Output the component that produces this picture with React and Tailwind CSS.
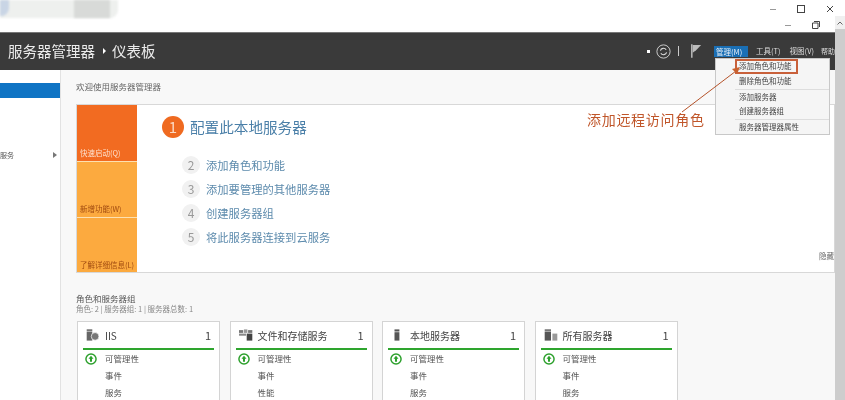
import React from 'react';

const steps = [
    ['2', '添加角色和功能'],
    ['3', '添加要管理的其他服务器'],
    ['4', '创建服务器组'],
    ['5', '将此服务器连接到云服务'],
];

const cards = [
    { title: 'IIS', icon: 'iis', rows: ['可管理性', '事件', '服务'] },
    { title: '文件和存储服务', icon: 'files', rows: ['可管理性', '事件', '性能'] },
    { title: '本地服务器', icon: 'local', rows: ['可管理性', '事件', '服务'] },
    { title: '所有服务器', icon: 'all', rows: ['可管理性', '事件', '服务'] },
];

const CardIcon = ({ type }) => {
    if (type === 'iis') {
        return (
            <svg width="14" height="12" viewBox="0 0 20 16">
                <rect x="1" y="0" width="8" height="2" fill="#555" />
                <rect x="1" y="3" width="8" height="13" fill="#666" />
                <circle cx="13" cy="10" r="5.5" fill="#777" stroke="#fff" />
            </svg>
        );
    }
    if (type === 'files') {
        return (
            <svg width="14" height="12" viewBox="0 0 20 16">
                <rect x="0" y="1" width="6" height="4" fill="#777" />
                <rect x="7" y="0" width="5" height="5" fill="#999" />
                <rect x="13" y="1" width="6" height="4" fill="#777" />
                <rect x="0" y="6" width="10" height="3" fill="#888" />
                <rect x="11" y="6" width="8" height="10" fill="#444" />
            </svg>
        );
    }
    if (type === 'local') {
        return (
            <svg width="14" height="12" viewBox="0 0 20 16">
                <rect x="5" y="0" width="7" height="3" fill="#555" />
                <rect x="5" y="4" width="7" height="12" fill="#555" />
            </svg>
        );
    }
    return (
        <svg width="14" height="12" viewBox="0 0 20 16">
            <rect x="1" y="0" width="9" height="2" fill="#555" />
            <rect x="1" y="3" width="9" height="13" fill="#555" />
            <rect x="12" y="6" width="7" height="10" fill="#999" />
        </svg>
    );
};

const UpIcon = () => (
    <svg width="12" height="12" viewBox="0 0 13 13">
        <circle cx="6.5" cy="6.5" r="5.5" fill="none" stroke="#2ca02c" strokeWidth="1.6" />
        <path d="M6.5 3 L9.2 6.2 H7.6 V9.6 H5.4 V6.2 H3.8 Z" fill="#2ca02c" />
    </svg>
);

const Card = ({ card }) => (
    <div className="w-[143px] h-[90px] bg-white border border-[#d4d4d4] px-[5px] overflow-hidden shrink-0">
        <div className="h-[28px] flex items-center border-b-2 border-[#2ea52e]">
            <div className="w-[20px] pl-[3px] flex shrink-0">
                <CardIcon type={card.icon} />
            </div>
            <span className="ml-[2px] flex-1 text-[10px] text-[#444]">{card.title}</span>
            <span className="pr-[3px] text-[11px] text-[#444]">1</span>
        </div>
        <div>
            {card.rows.map((row, i) => (
                <div key={row} className="h-[17px] flex items-center text-[8.5px] text-[#555]">
                    <div className="w-[22px] pl-[2px] flex shrink-0">{i === 0 && <UpIcon />}</div>
                    {row}
                </div>
            ))}
        </div>
    </div>
);

const App = () => {
    return (
        <div className="relative w-[845px] h-[400px] overflow-hidden bg-white blur-[0.35px] font-['Noto_Sans_CJK_SC','Noto_Sans',sans-serif]">
            {/* blurred title at top left */}
            <div className="absolute left-0 top-0 w-[118px] h-[18px] rounded-br-lg bg-[#eef0ee] blur-[1px]" />
            <div className="absolute left-0 top-0 w-[9px] h-[16px] rounded-br-lg bg-[#c9d5e5] blur-[1px]" />
            <div className="absolute left-[74px] top-0 w-[36px] h-[18px] bg-[#d8dad8] blur-[1px]" />

            {/* window title bar */}
            <div className="h-[32px] flex flex-col items-end">
                <div className="h-[16px] flex items-center gap-[21px] mr-[11px] pt-[2px]">
                    <span className="w-[6px] h-px bg-[#999]" />
                    <span className="w-[8px] h-[8px] border border-[#444]" />
                    <svg width="8" height="8" viewBox="0 0 8 8">
                        <path d="M1 1 L7 7 M7 1 L1 7" stroke="#444" />
                    </svg>
                </div>
                <div className="h-[16px] flex items-center gap-[21px] mr-[25px] pt-[2px]">
                    <span className="w-[6px] h-px bg-[#999]" />
                    <svg width="8" height="8" viewBox="0 0 8 8">
                        <path d="M2 .5 H7.5 V6 M.5 2 H6 V7.5 H.5 Z" stroke="#444" fill="none" />
                    </svg>
                </div>
            </div>

            {/* dark header */}
            <div className="h-[38px] bg-[#3a3a3a] border-t border-[#777] pb-[1px] flex items-center mr-[10px]">
                <span className="ml-[8px] text-[14.5px] text-[#ececec]">服务器管理器</span>
                <span className="ml-[8px] mr-[6px] w-0 h-0 border-y-[3px] border-y-transparent border-l-[3px] border-l-white" />
                <span className="text-[14.5px] text-[#ececec]">仪表板</span>
                <div className="ml-auto flex items-center">
                    <span className="w-[3px] h-[3px] bg-white mr-[6px]" />
                    <svg width="15" height="15" viewBox="0 0 17 17" className="mr-[7px]">
                        <circle cx="8.5" cy="8.5" r="7.5" fill="none" stroke="#ddd" />
                        <path d="M5 7.5 A3.6 3.6 0 0 1 11.5 6.5 M12 9.5 A3.6 3.6 0 0 1 5.5 10.5" fill="none" stroke="#ddd" strokeWidth="1.3" />
                    </svg>
                    <span className="w-px h-[10px] bg-[#ccc] mr-[12px]" />
                    <svg width="11" height="14" viewBox="0 0 13 16" className="mr-[12px]">
                        <path d="M1 0 V16" stroke="#ddd" strokeWidth="1.4" />
                        <path d="M2 1 H12 L6 7 L2 10 Z" fill="#bbb" />
                    </svg>
                    <span className="bg-[#1a6fb5] text-[#e8f0f8] text-[7.5px] leading-[11px] px-[2px] w-[34px] whitespace-nowrap">管理(M)</span>
                    <span className="ml-[8px] text-[#ddd] text-[7.5px] whitespace-nowrap">工具(T)</span>
                    <span className="ml-[9px] text-[#ddd] text-[7.5px] whitespace-nowrap">视图(V)</span>
                    <span className="ml-[7px] text-[#ddd] text-[7px] whitespace-nowrap">帮助</span>
                </div>
            </div>

            {/* body */}
            <div className="flex h-[330px] mr-[10px]">
                <div className="w-[61px] shrink-0 bg-white border-r border-[#e2e2e2] pt-[13px]">
                    <div className="h-[15px] bg-[#0f74c4]" />
                    <div className="mt-[49px] h-[16px] flex items-center justify-between pr-[3px] text-[7px] text-[#555]">
                        <span>服务</span>
                        <span className="w-0 h-0 border-y-[3.5px] border-y-transparent border-l-[4px] border-l-[#777]" />
                    </div>
                </div>
                <div className="flex-1 bg-[#f8f8f8] pl-[15px]">
                    <div className="h-[34px] flex items-center pb-[1px] text-[8.5px] text-[#666]">欢迎使用服务器管理器</div>
                    <div className="h-[169px] bg-white border border-[#d8d8d8] flex">
                        <div className="w-[60px] shrink-0 flex flex-col text-[7.5px]">
                            <div className="h-[56px] bg-[#f26b21] text-[#fde0cc] flex items-end pl-[3px] pb-[3px] whitespace-nowrap">快速启动(Q)</div>
                            <div className="h-[56px] bg-[#fcaa3f] border-t border-[#fde0b0] text-[#a04a10] flex items-end pl-[3px] pb-[3px] whitespace-nowrap">新增功能(W)</div>
                            <div className="flex-1 bg-[#fcaa3f] border-t border-[#fde0b0] text-[#a04a10] flex items-end pl-[3px] pb-[2px] whitespace-nowrap">了解详细信息(L)</div>
                        </div>
                        <div className="flex-1 pl-[25px] pt-[11px] relative">
                            <div className="flex items-center h-[22px]">
                                <span className="w-[22px] h-[22px] rounded-full bg-[#ef6a20] text-[#fbd9c2] text-[15px] flex items-center justify-center">1</span>
                                <span className="ml-[6px] text-[14.6px] text-[#4a7fa8]">配置此本地服务器</span>
                            </div>
                            <div className="mt-[18px] pl-[20px] flex flex-col gap-[6px]">
                                {steps.map(([num, label]) => (
                                    <div key={num} className="flex items-center h-[18px]">
                                        <span className="w-[18px] h-[18px] rounded-full bg-[#f1f1f1] text-[#999] text-[12px] flex items-center justify-center">{num}</span>
                                        <span className="ml-[6px] text-[11.3px] text-[#5d8bad]">{label}</span>
                                    </div>
                                ))}
                            </div>
                            <span className="absolute right-0 bottom-[11px] text-[7.5px] text-[#666]">隐藏</span>
                        </div>
                    </div>
                    <div className="mt-[19px] text-[8.5px] leading-[12px] text-[#555]">角色和服务器组</div>
                    <div className="text-[7.5px] leading-[9px] text-[#888]">角色: 2 | 服务器组: 1 | 服务器总数: 1</div>
                    <div className="mt-[8px] flex gap-[9.5px] pl-[1px]">
                        {cards.map((card) => <Card key={card.icon} card={card} />)}
                    </div>
                </div>
            </div>

            {/* scrollbar */}
            <div className="absolute right-0 top-[16px] bottom-0 w-[10px] bg-[#f0f0f0]">
                <div className="h-[13px] flex items-center justify-center text-[#666]">
                    <svg width="6" height="4" viewBox="0 0 6 4"><path d="M.5 3.5 L3 1 L5.5 3.5" fill="none" stroke="#666" /></svg>
                </div>
                <div className="h-full bg-[#cdcdcd]" />
            </div>

            {/* open menu */}
            <div className="absolute left-[715px] top-[58px] w-[115px] h-[77px] bg-[#f5f5f5] border border-[#c8c8c8] pl-[19px] text-[7.5px] text-[#444]">
                <div className="h-[15px] w-[63px] border-2 border-[#c8603a] flex items-center pl-[2px] pb-[1px] whitespace-nowrap">添加角色和功能</div>
                <div className="h-[14px] flex items-center pl-[4px] pb-[1px]">删除角色和功能</div>
                <div className="h-px bg-[#ddd] mt-[1px]" />
                <div className="h-[14px] flex items-center pl-[4px] pb-[1px]">添加服务器</div>
                <div className="h-[14px] flex items-center pl-[4px] pb-[1px]">创建服务器组</div>
                <div className="h-px bg-[#ddd] mt-[1px]" />
                <div className="h-[14px] flex items-center pl-[4px]">服务器管理器属性</div>
            </div>

            {/* annotation */}
            <svg className="absolute left-[680px] top-[60px]" width="62" height="55" viewBox="0 0 62 55">
                <path d="M2 52 L56 11" stroke="#b5532a" strokeWidth="1" />
                <path d="M60 7 L52 9 L57 14 Z" fill="#c8602e" />
            </svg>
            <span className="absolute left-[587px] top-[108px] text-[14px] leading-[22px] text-[#c0562a] tracking-[0.7px]">添加远程访问角色</span>
        </div>
    );
};

export default App;
